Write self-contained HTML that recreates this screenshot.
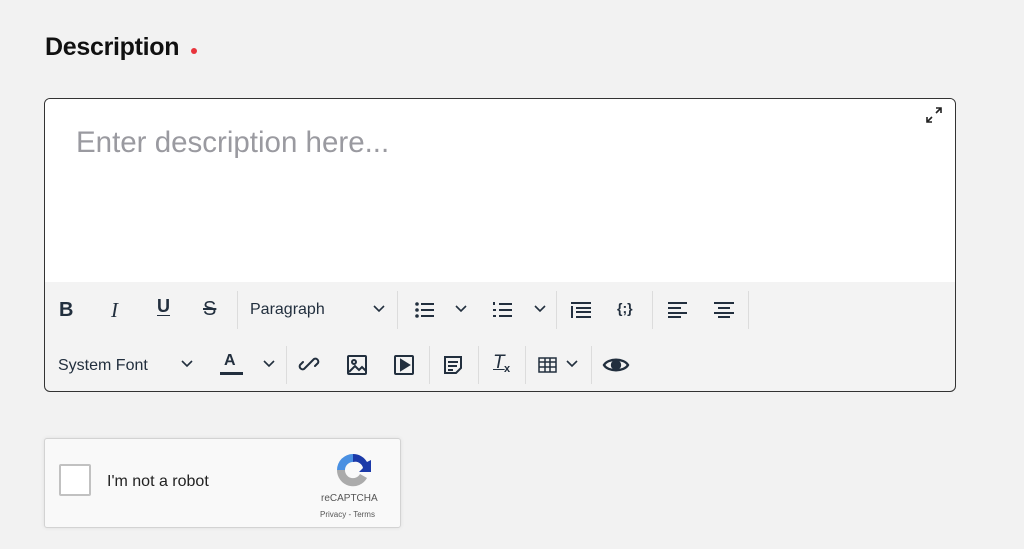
<!DOCTYPE html>
<html><head><meta charset="utf-8"><style>
body{margin:0;width:1024px;height:549px;background:#f2f2f2;font-family:"Liberation Sans",sans-serif;position:relative;overflow:hidden}
.a{position:absolute}
h1{position:absolute;left:45px;top:33px;margin:0;font-size:25px;font-weight:bold;color:#111;letter-spacing:-0.3px}
.dot{position:absolute;left:191px;top:48px;width:6px;height:6px;border-radius:50%;background:#e8343c}
.ed{position:absolute;left:44px;top:98px;width:910px;height:292px;border:1px solid #333;border-radius:6px;background:#f3f3f3;overflow:hidden}
.wh{position:absolute;left:0;top:0;right:0;height:183px;background:#fff}
.ph{position:absolute;left:31px;top:27px;font-size:29.5px;color:#9a9aa0}
.sep{position:absolute;width:1px;height:38px;background:#dcdcdc}
.t{position:absolute;font-size:16px;color:#222f3e}
svg{position:absolute}
</style></head><body>
<h1>Description</h1><div class="dot"></div>
<div class="ed"><div class="wh"><div class="ph">Enter description here...</div>
<svg style="left:880px;top:7px" width="18" height="18" viewBox="0 0 18 18" fill="none" stroke="#222" stroke-width="1.6"><path d="M11 2h5v5M16 2l-5 5M7 16H2v-5M2 16l5-5"/></svg></div></div>
<!-- row1 -->
<div class="t" style="left:59px;top:299px;font-weight:bold;font-size:20px">B</div>
<div class="t" style="left:111px;top:298px;font-style:italic;font-size:21px;font-family:'Liberation Serif',serif">I</div>
<div class="t" style="left:157px;top:296px;font-size:18px;text-decoration:underline;text-underline-offset:3px;font-weight:bold">U</div>
<div class="t" style="left:203px;top:298px;font-size:20px;text-decoration:line-through">S</div>
<div class="sep" style="left:237px;top:291px"></div>
<div class="t" style="left:250px;top:301px;font-size:16px">Paragraph</div>
<svg style="left:372px;top:304px" width="14" height="10" viewBox="0 0 14 10" fill="none" stroke="#222f3e" stroke-width="1.6"><path d="M2 2l5 5 5-5"/></svg>
<div class="sep" style="left:397px;top:291px"></div>
<svg style="left:414px;top:300px" width="22" height="20" viewBox="0 0 22 20" fill="#222f3e"><circle cx="3" cy="4" r="1.8"/><circle cx="3" cy="10" r="1.8"/><circle cx="3" cy="16" r="1.8"/><rect x="7" y="3" width="13" height="2"/><rect x="7" y="9" width="13" height="2"/><rect x="7" y="15" width="13" height="2"/></svg>
<svg style="left:454px;top:304px" width="14" height="10" viewBox="0 0 14 10" fill="none" stroke="#222f3e" stroke-width="1.6"><path d="M2 2l5 5 5-5"/></svg>
<svg style="left:492px;top:300px" width="22" height="20" viewBox="0 0 22 20" fill="#222f3e"><rect x="1" y="2" width="2" height="3"/><rect x="1" y="9" width="3" height="2"/><rect x="1" y="15" width="3" height="2"/><rect x="7" y="3" width="13" height="2"/><rect x="7" y="9" width="13" height="2"/><rect x="7" y="15" width="13" height="2"/></svg>
<svg style="left:533px;top:304px" width="14" height="10" viewBox="0 0 14 10" fill="none" stroke="#222f3e" stroke-width="1.6"><path d="M2 2l5 5 5-5"/></svg>
<div class="sep" style="left:556px;top:291px"></div>
<svg style="left:570px;top:300px" width="22" height="20" viewBox="0 0 22 20" fill="#222f3e"><rect x="1" y="2" width="20" height="2"/><rect x="1" y="6" width="2" height="12"/><rect x="6" y="7" width="15" height="2"/><rect x="6" y="11" width="15" height="2"/><rect x="6" y="16" width="15" height="2"/></svg>
<div class="t" style="left:617px;top:300px;font-size:14px;font-weight:bold">{;}</div>
<div class="sep" style="left:652px;top:291px"></div>
<svg style="left:667px;top:300px" width="22" height="20" viewBox="0 0 22 20" fill="#222f3e"><rect x="1" y="2" width="19" height="2"/><rect x="1" y="7" width="13" height="2"/><rect x="1" y="12" width="19" height="2"/><rect x="1" y="16" width="13" height="2"/></svg>
<svg style="left:713px;top:300px" width="22" height="20" viewBox="0 0 22 20" fill="#222f3e"><rect x="1" y="2" width="20" height="2"/><rect x="5" y="7" width="12" height="2"/><rect x="1" y="12" width="20" height="2"/><rect x="5" y="16" width="12" height="2"/></svg>
<div class="sep" style="left:748px;top:291px"></div>
<!-- row2 -->
<div class="t" style="left:58px;top:357px;font-size:16px">System Font</div>
<svg style="left:180px;top:359px" width="14" height="10" viewBox="0 0 14 10" fill="none" stroke="#222f3e" stroke-width="1.6"><path d="M2 2l5 5 5-5"/></svg>
<div class="t" style="left:224px;top:352px;font-size:16px;font-weight:bold">A</div>
<div class="a" style="left:220px;top:372px;width:23px;height:3px;background:#222f3e"></div>
<svg style="left:262px;top:359px" width="14" height="10" viewBox="0 0 14 10" fill="none" stroke="#222f3e" stroke-width="1.6"><path d="M2 2l5 5 5-5"/></svg>
<div class="sep" style="left:286px;top:346px"></div>
<svg style="left:298px;top:353px" width="22" height="22" viewBox="0 0 22 22" fill="none" stroke="#222f3e" stroke-width="2"><path d="M9 13l-3 3a3 3 0 0 1-4-4l3-3M13 9l3-3a3 3 0 0 1 4 4l-3 3M8 14l6-6" stroke-linecap="round"/></svg>
<svg style="left:346px;top:354px" width="22" height="22" viewBox="0 0 22 22" fill="none" stroke="#222f3e" stroke-width="2"><rect x="2" y="2" width="18" height="18" rx="1"/><circle cx="8" cy="8" r="2"/><path d="M3 18l6-6 4 4 3-3 4 4"/></svg>
<svg style="left:393px;top:354px" width="22" height="22" viewBox="0 0 22 22" fill="none" stroke="#222f3e" stroke-width="2"><rect x="2" y="2" width="18" height="18" rx="1"/><path d="M8 6v10l8-5z" fill="#222f3e"/></svg>
<div class="sep" style="left:429px;top:346px"></div>
<svg style="left:442px;top:354px" width="22" height="22" viewBox="0 0 22 22" fill="none" stroke="#222f3e" stroke-width="2"><path d="M3 3h16v11l-5 5H3z"/><path d="M6 8h10M6 12h9M6 16h5"/></svg>
<div class="sep" style="left:478px;top:346px"></div>
<div class="t" style="left:493px;top:352px;font-size:19px;font-style:italic;text-decoration:underline">T</div>
<div class="t" style="left:504px;top:363px;font-size:11px;font-weight:bold">x</div>
<div class="sep" style="left:525px;top:346px"></div>
<svg style="left:538px;top:356px" width="20" height="18" viewBox="0 0 20 18" fill="none" stroke="#222f3e" stroke-width="1.5"><rect x="1" y="2" width="17" height="14"/><path d="M1 6h17M1 11h17M7 2v14M12 2v14"/></svg>
<svg style="left:565px;top:359px" width="14" height="10" viewBox="0 0 14 10" fill="none" stroke="#222f3e" stroke-width="1.6"><path d="M2 2l5 5 5-5"/></svg>
<div class="sep" style="left:591px;top:346px"></div>
<svg style="left:602px;top:354px" width="28" height="22" viewBox="0 0 28 22" fill="none" stroke="#222f3e" stroke-width="2.4"><path d="M2 11C6 4 22 4 26 11 22 18 6 18 2 11z"/><circle cx="14" cy="11" r="4" fill="#222f3e"/></svg>
<!-- captcha -->
<div class="a" style="left:44px;top:438px;width:355px;height:88px;background:#f9f9f9;border:1px solid #d3d3d3;border-radius:3px;box-shadow:0 0 4px rgba(0,0,0,.08)"></div>
<div class="a" style="left:59px;top:464px;width:28px;height:28px;background:#fff;border:2px solid #c1c1c1;border-radius:2px"></div>
<div class="a" style="left:107px;top:473px;font-size:16px;color:#222">I'm not a robot</div>
<svg style="left:334px;top:451px" width="38" height="38" viewBox="0 0 38 38"><path d="M19 3a16 16 0 0 0-16 16h8a8 8 0 0 1 8-8z" fill="#4a90e2"/><path d="M19 3a16 16 0 0 1 14 8l4-2v12H25l4-4a8 8 0 0 0-10-6z" fill="#1c3aa9"/><path d="M3 19a16 16 0 0 0 30 8l-7-4a8 8 0 0 1-15-4z" fill="#ababab"/></svg>
<div class="a" style="left:321px;top:493px;font-size:10px;color:#555">reCAPTCHA</div>
<div class="a" style="left:320px;top:510px;font-size:8px;color:#555">Privacy - Terms</div>
</body></html>
